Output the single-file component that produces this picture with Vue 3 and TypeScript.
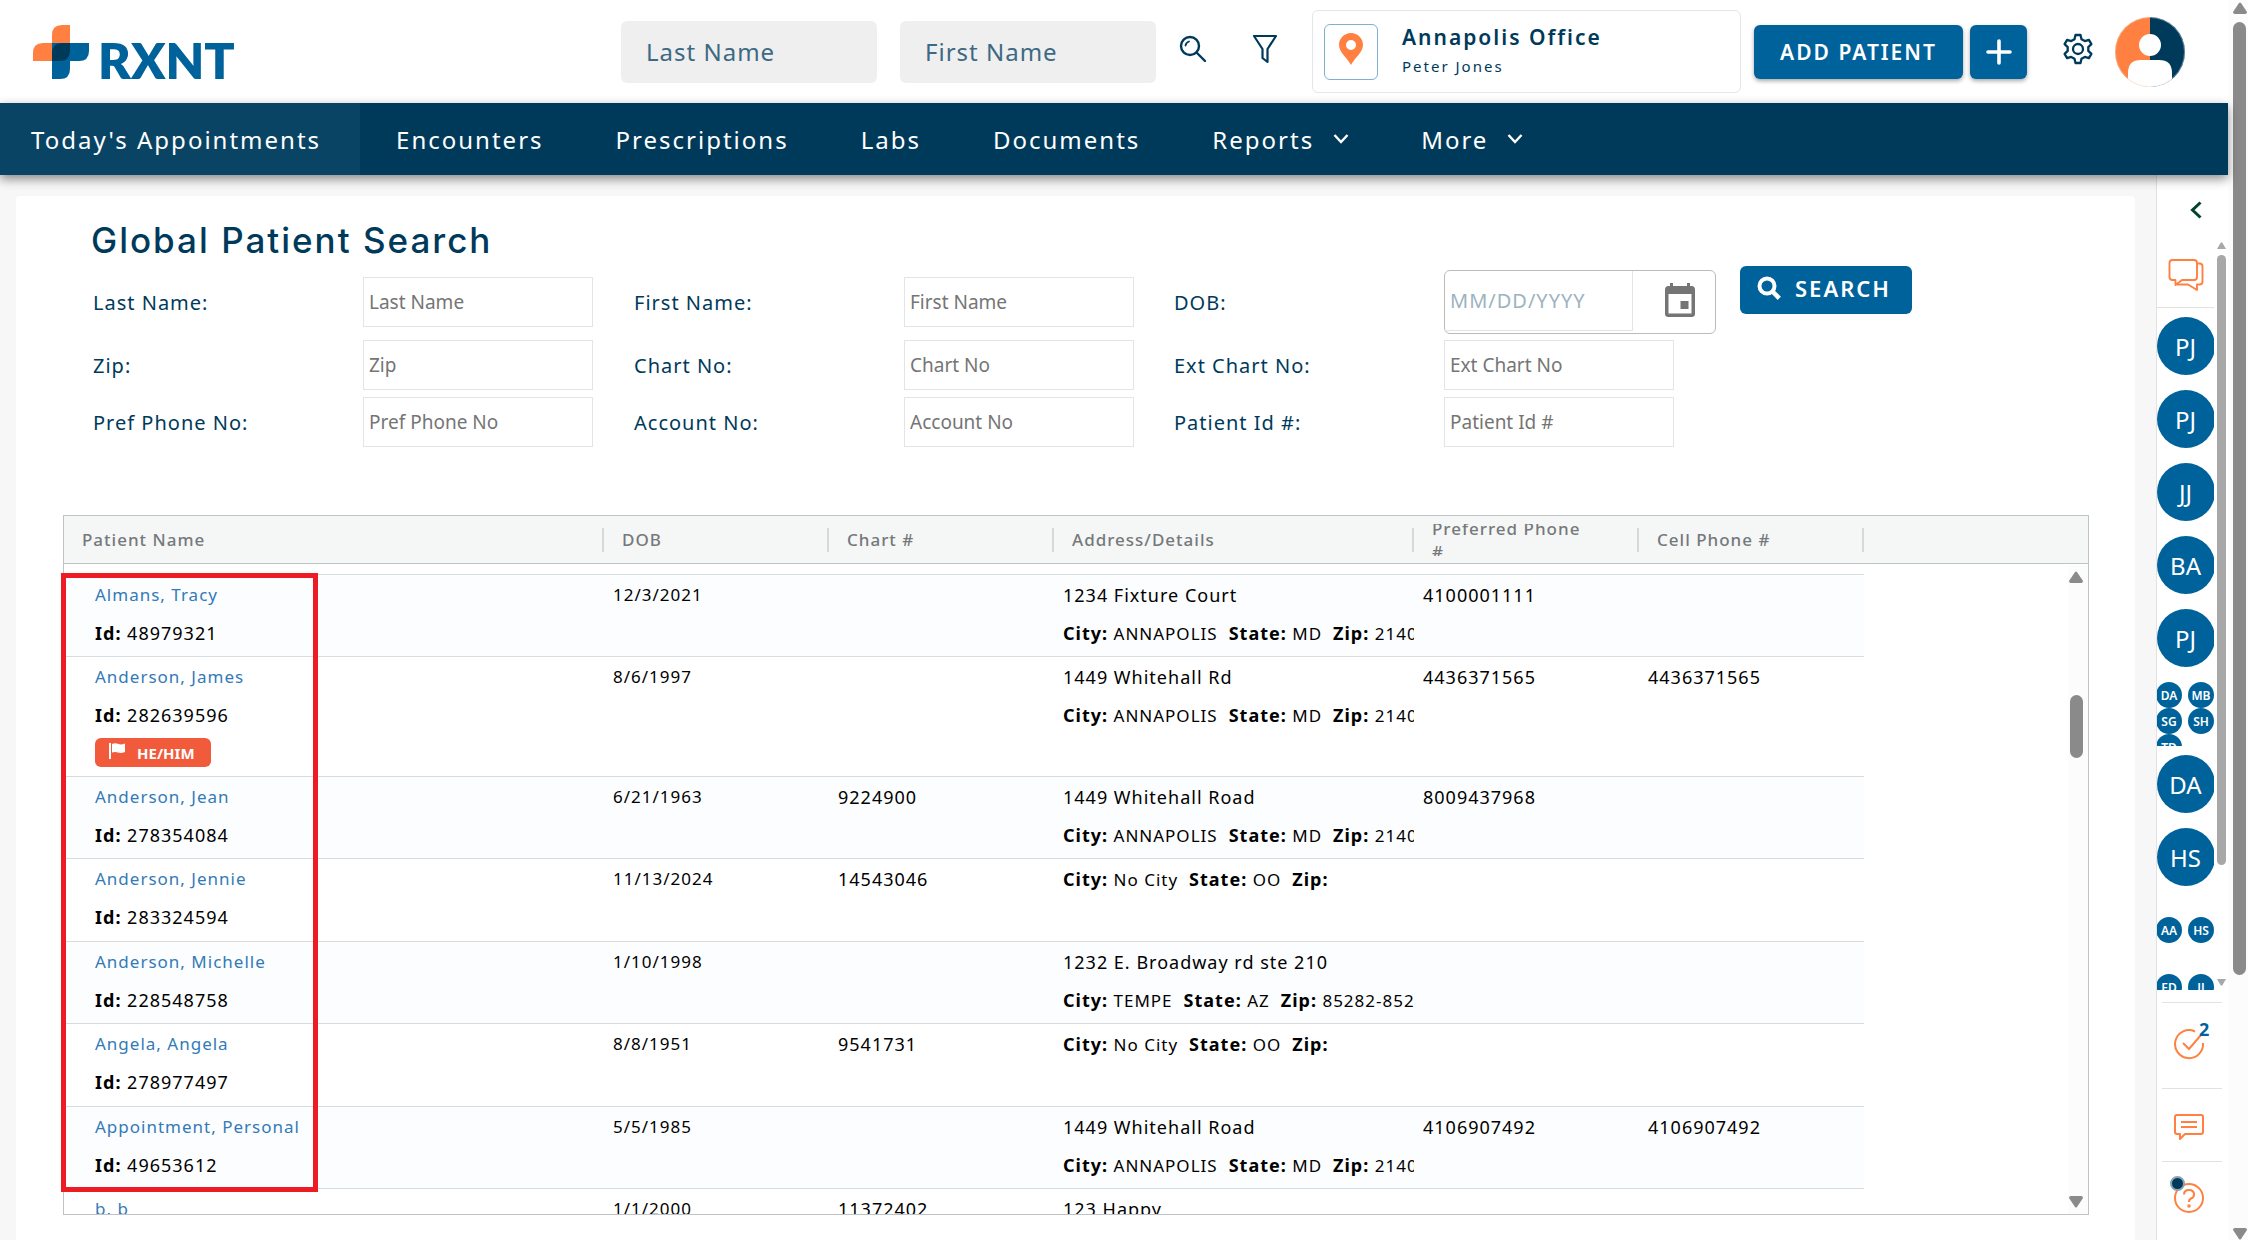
<script setup lang="ts">
import { ref } from 'vue'

interface NavItem { label: string; active?: boolean; menu?: boolean }
interface Field { id: string; label: string; placeholder: string; date?: boolean }
interface Patient {
  name: string
  id?: string
  flag?: string
  dob: string
  chart?: string
  street?: string
  city?: string
  state?: string
  zip?: string
  phone?: string
  cell?: string
}

const navItems: NavItem[] = [
  { label: "Today's Appointments", active: true },
  { label: 'Encounters' },
  { label: 'Prescriptions' },
  { label: 'Labs' },
  { label: 'Documents' },
  { label: 'Reports', menu: true },
  { label: 'More', menu: true },
]

const fields: Field[] = [
  { id: 'last-name', label: 'Last Name:', placeholder: 'Last Name' },
  { id: 'first-name', label: 'First Name:', placeholder: 'First Name' },
  { id: 'dob', label: 'DOB:', placeholder: 'MM/DD/YYYY', date: true },
  { id: 'zip', label: 'Zip:', placeholder: 'Zip' },
  { id: 'chart-no', label: 'Chart No:', placeholder: 'Chart No' },
  { id: 'ext-chart-no', label: 'Ext Chart No:', placeholder: 'Ext Chart No' },
  { id: 'phone-no', label: 'Pref Phone No:', placeholder: 'Pref Phone No' },
  { id: 'account-no', label: 'Account No:', placeholder: 'Account No' },
  { id: 'patient-id', label: 'Patient Id #:', placeholder: 'Patient Id #' },
]

const columns = ['Patient Name', 'DOB', 'Chart #', 'Address/Details', 'Preferred Phone #', 'Cell Phone #']

const patients: Patient[] = [
  { name: 'Almans, Tracy', id: '48979321', dob: '12/3/2021', street: '1234 Fixture Court', city: 'ANNAPOLIS', state: 'MD', zip: '2140', phone: '4100001111' },
  { name: 'Anderson, James', id: '282639596', flag: 'HE/HIM', dob: '8/6/1997', street: '1449 Whitehall Rd', city: 'ANNAPOLIS', state: 'MD', zip: '2140', phone: '4436371565', cell: '4436371565' },
  { name: 'Anderson, Jean', id: '278354084', dob: '6/21/1963', chart: '9224900', street: '1449 Whitehall Road', city: 'ANNAPOLIS', state: 'MD', zip: '2140', phone: '8009437968' },
  { name: 'Anderson, Jennie', id: '283324594', dob: '11/13/2024', chart: '14543046', city: 'No City', state: 'OO', zip: '' },
  { name: 'Anderson, Michelle', id: '228548758', dob: '1/10/1998', street: '1232 E. Broadway rd ste 210', city: 'TEMPE', state: 'AZ', zip: '85282-852' },
  { name: 'Angela, Angela', id: '278977497', dob: '8/8/1951', chart: '9541731', city: 'No City', state: 'OO', zip: '' },
  { name: 'Appointment, Personal', id: '49653612', dob: '5/5/1985', street: '1449 Whitehall Road', city: 'ANNAPOLIS', state: 'MD', zip: '2140', phone: '4106907492', cell: '4106907492' },
  { name: 'b, b', dob: '1/1/2000', chart: '11372402', street: '123 Happy' },
]

const chats: string[][] = [
  ['PJ'], ['PJ'], ['JJ'], ['BA'], ['PJ'],
  ['DA', 'MB', 'SG', 'SH', 'TD'],
  ['DA'], ['HS'],
  ['AA', 'HS'],
  ['ED', 'JJ', 'PJ'],
]

const form = ref<Record<string, string>>({})
</script>

<template>
  <div class="app">
    <div class="page">
      <header class="top">
        <a class="logo" href="#" aria-label="RXNT">
          <svg width="56" height="54" viewBox="0 0 56 54">
            <path d="M19 18V10Q19 0 29 0H37V18Z" fill="#ff8040" />
            <path d="M0 36V28Q0 18 10 18H28V36Z" fill="#ff8040" />
            <path d="M19 18H56V26Q56 36 46 36H37V44Q37 54 27 54H19Z" fill="#00629b" />
            <path d="M19 36V28Q19 18 29 18H37V26Q37 36 27 36Z" fill="#003a5b" />
          </svg>
          <span>RXNT</span>
        </a>
        <input class="quick" type="text" placeholder="Last Name" aria-label="Quick search last name">
        <input class="quick" type="text" placeholder="First Name" aria-label="Quick search first name">
        <button class="icon find" aria-label="Search">
          <svg width="28" height="28" viewBox="0 0 28 28" fill="none" stroke="#003a5b" stroke-width="2.4" stroke-linecap="round">
            <circle cx="11" cy="11" r="9" /><path d="M17.5 17.5 26 26" /><path d="M6.5 10.5A5 5 0 0 1 10 6.5" stroke-width="1.8" />
          </svg>
        </button>
        <button class="icon filter" aria-label="Filter">
          <svg width="26" height="30" viewBox="0 0 26 30" fill="none" stroke="#003a5b" stroke-width="2.2" stroke-linejoin="round">
            <path d="M2 2H24L15.500 15V28L10.500 24V15Z" />
          </svg>
        </button>
        <button class="office">
          <span class="pin">
            <svg width="24" height="32" viewBox="0 0 24 32"><path fill="#ff8040" fill-rule="evenodd" d="M12 0C5.400 0 0 5.200 0 11.700 0 19.500 8.500 25 12 32 15.500 25 24 19.500 24 11.700 24 5.200 18.600 0 12 0ZM12 7a5 5 0 1 1 0 10 5 5 0 0 1 0-10Z" /></svg>
          </span>
          <span class="who"><strong>Annapolis Office</strong><small>Peter Jones</small></span>
        </button>
        <button class="primary add">ADD PATIENT</button>
        <button class="primary plus" aria-label="Add">
          <svg width="26" height="26" viewBox="0 0 26 26" stroke="#fff" stroke-width="3.600" stroke-linecap="round"><path d="M13 2V24M2 13H24" /></svg>
        </button>
        <button class="icon gear" aria-label="Settings">
          <svg width="30" height="32" viewBox="0 0 30 32" fill="none" stroke="#003a5b" stroke-width="2.300" stroke-linejoin="round">
            <path d="M12.500 2h5l1 4.200 3.300 1.900 4.100-1.300 2.500 4.300-3.100 3v3.800l3.100 3-2.500 4.300-4.100-1.300-3.300 1.900-1 4.200h-5l-1-4.200-3.300-1.900-4.100 1.300-2.500-4.300 3.100-3v-3.800l-3.100-3 2.500-4.300 4.100 1.300 3.300-1.900Z" />
            <circle cx="15" cy="16" r="5" />
          </svg>
        </button>
        <button class="icon profile" aria-label="Profile">
          <svg width="70" height="70" viewBox="0 0 70 70">
            <clipPath id="face"><circle cx="35" cy="35" r="35" /></clipPath>
            <g clip-path="url(#face)">
              <rect width="35" height="70" fill="#ff8040" /><rect x="35" width="35" height="70" fill="#003a5b" />
              <circle cx="35" cy="28" r="11" fill="#fff" />
              <path d="M13 70V56Q13 43 26 43H44Q57 43 57 56V70Z" fill="#fff" />
            </g>
            <circle cx="35" cy="35" r="34.500" fill="none" stroke="#e8eaec" stroke-opacity=".4" />
          </svg>
        </button>
      </header>

      <nav class="nav">
        <a v-for="item in navItems" :key="item.label" href="#" :class="{ active: item.active }">
          {{ item.label }}
          <svg v-if="item.menu" width="16" height="12" viewBox="0 0 16 12" fill="none" stroke="#fff" stroke-width="2.400"><path d="M1.500 2 8 9 14.500 2" /></svg>
        </a>
      </nav>

      <div class="body">
        <main class="card">
          <h1>Global Patient Search</h1>
          <form class="search" @submit.prevent>
            <div class="fields">
              <template v-for="f in fields" :key="f.id">
                <label :for="f.id">{{ f.label }}</label>
                <div v-if="f.date" class="date">
                  <input :id="f.id" v-model="form[f.id]" type="text" :placeholder="f.placeholder">
                  <button type="button" aria-label="Open calendar">
                    <svg width="32" height="36" viewBox="0 0 32 36" fill="#757575">
                      <path fill-rule="evenodd" d="M6 1h3v3h14V1h3v3h1.500Q31 4 31 7.500V32q0 3-3.500 3h-23Q1 35 1 32V7.500Q1 4 4.500 4H6ZM4.500 12V31.500h23V12Z" />
                      <rect x="16.500" y="19" width="8" height="8" />
                    </svg>
                  </button>
                </div>
                <input v-else :id="f.id" v-model="form[f.id]" class="box" type="text" :placeholder="f.placeholder">
              </template>
            </div>
            <button class="go" type="submit">
              <svg width="24" height="24" viewBox="0 0 24 24" fill="none" stroke="#fff" stroke-width="4"><circle cx="10" cy="10" r="7.500" /><path d="M15.500 15.500 22.300 22.300" stroke-width="4.500" /></svg>
              SEARCH
            </button>
          </form>

          <div class="grid">
            <div class="viewport">
              <table>
                <colgroup><col class="c-name"><col class="c-s"><col class="c-s"><col class="c-addr"><col class="c-s"><col class="c-s"><col></colgroup>
                <thead>
                  <tr><th v-for="c in columns" :key="c" scope="col"><div><span>{{ c }}</span></div></th><td /></tr>
                </thead>
                <tbody>
                  <tr class="lead" aria-hidden="true"><td colspan="6" /><td /></tr>
                  <tr v-for="p in patients" :key="p.name" class="row" :class="{ tall: p.flag }">
                    <td class="name">
                      <a href="#">{{ p.name }}</a>
                      <p v-if="p.id"><b>Id:</b> {{ p.id }}</p>
                      <span v-if="p.flag" class="flag">
                        <svg width="16" height="16" viewBox="0 0 16 16" fill="#fff"><path d="M0 0H2V16H0ZM3 1Q6-.5 9 .8T16 .5V9Q12 10.500 9 9.500T3 9.500Z" /></svg>
                        {{ p.flag }}
                      </span>
                    </td>
                    <td class="dob">{{ p.dob }}</td>
                    <td>{{ p.chart }}</td>
                    <td>
                      <p v-if="p.street">{{ p.street }}</p>
                      <p v-if="p.city" class="city"><span><b>City:</b> {{ p.city }}</span><span><b>State:</b> {{ p.state }}</span><span><b>Zip:</b> {{ p.zip }}</span></p>
                    </td>
                    <td>{{ p.phone }}</td>
                    <td>{{ p.cell }}</td>
                    <td />
                  </tr>
                </tbody>
              </table>
            </div>
            <div class="bar" aria-hidden="true">
              <svg width="14" height="12" viewBox="0 0 14 12" fill="#8a8a8a"><path d="M6 1Q7 0 8 1L14 10Q14 12 12 12H2Q0 12 0 10Z" /></svg>
              <i class="thumb" />
              <svg width="14" height="12" viewBox="0 0 14 12" fill="#8a8a8a"><path d="M6 11Q7 12 8 11L14 2Q14 0 12 0H2Q0 0 0 2Z" /></svg>
            </div>
            <div class="mark" />
          </div>
        </main>

        <aside class="side">
          <button class="icon collapse" aria-label="Expand panel">
            <svg width="12" height="18" viewBox="0 0 12 18" fill="none" stroke="#00432f" stroke-width="3"><path d="M10.500 1.500 2.500 9 10.500 16.500" /></svg>
          </button>
          <div class="chatwrap">
            <div class="chats">
              <button class="icon talk" aria-label="Conversations">
                <svg width="36" height="34" viewBox="0 0 36 34" fill="none" stroke="#ff8040" stroke-width="1.900" stroke-linejoin="round">
                  <path d="M4.500 2H26Q29 2 29 5V19Q29 22 26 22H14L7.500 27V22H4.500Q1.500 22 1.500 19V5Q1.500 2 4.500 2Z" />
                  <path d="M29 5.500H31.500Q34.500 5.500 34.500 8.500V23.500Q34.500 26.500 31.500 26.500H29V32L20 26.500H9" />
                </svg>
              </button>
              <button v-for="(c, i) in chats" :key="i" class="chat" :class="{ pair: c.length > 1, mid: c.length === 2 }">
                <span v-for="n in c" :key="n">{{ n }}</span>
              </button>
            </div>
            <div class="slim" aria-hidden="true">
              <svg width="9" height="7" viewBox="0 0 9 7" fill="#a8a8a8"><path d="M3.500 1Q4.500-.5 5.500 1L9 7H0Z" /></svg>
              <i class="thumb" />
              <svg width="9" height="7" viewBox="0 0 9 7" fill="#a8a8a8"><path d="M3.500 6Q4.500 7.500 5.500 6L9 0H0Z" /></svg>
            </div>
          </div>
          <button class="tool tasks" aria-label="Tasks">
            <svg width="32" height="32" viewBox="0 0 32 32" fill="none" stroke="#ff8040" stroke-width="2"><path d="M22 3.500A14 14 0 1 0 30 15" /><path d="M10 15 16 21 28 7" /></svg>
            <b>2</b>
          </button>
          <button class="tool" aria-label="Messages">
            <svg width="32" height="28" viewBox="0 0 32 28" fill="none" stroke="#ff8040" stroke-width="2" stroke-linejoin="round"><path d="M4 2H28Q30 2 30 4V19Q30 21 28 21H12L7 26V21H4Q2 21 2 19V4Q2 2 4 2ZM8 9H24M8 14H24" /></svg>
          </button>
          <button class="tool help" aria-label="Help">
            <svg width="32" height="32" viewBox="0 0 32 32" fill="none" stroke="#ff8040" stroke-width="2"><circle cx="16" cy="16" r="14" /><path d="M11 12.500Q11 8 16 8T21 12.500Q21 15.500 18 16.500 16 17.300 16 20" /><circle cx="16" cy="24" r=".8" /></svg>
            <i />
          </button>
        </aside>
      </div>
    </div>

    <div class="scroll" aria-hidden="true">
      <svg width="14" height="12" viewBox="0 0 14 12" fill="#8a8a8a"><path d="M6 1Q7 0 8 1L14 10Q14 12 12 12H2Q0 12 0 10Z" /></svg>
      <i class="thumb" />
      <svg width="14" height="12" viewBox="0 0 14 12" fill="#8a8a8a"><path d="M6 11Q7 12 8 11L14 2Q14 0 12 0H2Q0 0 0 2Z" /></svg>
    </div>
  </div>
</template>

<style>
body { margin: 0; background: #f7f7f7; }
</style>

<style scoped>
* { box-sizing: border-box; }
.app {
  display: flex;
  height: 100vh;
  overflow: hidden;
  font-family: "Noto Sans", "Open Sans", sans-serif;
  color: #003a5b;
}
button { font: inherit; color: inherit; padding: 0; border: 0; background: none; cursor: pointer; }
input { font: inherit; color: inherit; min-width: 0; }
a { text-decoration: none; }
p { margin: 0; }
svg { flex: none; display: block; }
.page { flex: 1; min-width: 0; display: flex; flex-direction: column; }

.top { flex: none; display: flex; align-items: center; height: 103px; padding: 0 43px 0 33px; background: #fff; }
.logo { display: flex; gap: 9px; align-items: flex-end; margin-right: auto; color: #00629b; font: 800 50px/37px Lato, sans-serif; }
.quick { width: 256px; height: 62px; margin-right: 23px; padding: 0 25px; border: 0; border-radius: 6px; background: #efefef; font-size: 24px; letter-spacing: 1px; }
.quick::placeholder { color: #3e6983; opacity: 1; }
.icon { display: flex; align-items: center; justify-content: center; }
.find { width: 28px; margin-right: 45px; padding-bottom: 6px; }
.filter { width: 26px; margin-right: 34px; padding-bottom: 6px; }
.office { display: flex; align-items: center; gap: 24px; width: 429px; height: 83px; padding: 0 11px; margin-right: 13px; border: 1px solid #e6e6e6; border-radius: 6px; text-align: left; }
.pin { display: flex; align-items: center; justify-content: center; width: 54px; height: 56px; padding-bottom: 6px; border: 1px solid #80b0cd; border-radius: 6px; }
.who { display: flex; flex-direction: column; gap: 3px; padding-bottom: 2px; }
.who strong { font-size: 21px; font-weight: 600; line-height: 28px; letter-spacing: 2px; }
.who small { font-size: 15px; line-height: 24px; letter-spacing: 2px; }
.primary { display: flex; align-items: center; justify-content: center; height: 54px; border-radius: 6px; background: #00629b; color: #fff; box-shadow: 0 2px 4px rgba(0, 0, 0, .35); }
.add { width: 209px; margin-right: 7px; font-size: 21px; font-weight: 600; letter-spacing: 2px; }
.plus { width: 57px; margin-right: 36px; }
.gear { width: 30px; margin-right: 22px; padding-bottom: 6px; }

.nav { flex: none; position: relative; z-index: 2; display: flex; height: 72px; background: #003a5b; box-shadow: 0 4px 10px rgba(0, 0, 0, .45); }
.nav a { display: flex; align-items: center; gap: 19px; padding: 0 36px; color: #fff; font-size: 24px; letter-spacing: 2px; white-space: nowrap; }
.nav a.active { padding: 0 39px 0 31px; background: #0a4464; }

.body { flex: 1; min-height: 0; display: flex; background: #f7f7f7; }
.card { flex: 1; min-width: 0; display: flex; flex-direction: column; margin: 21px 21px 0 16px; padding: 20px 46px 25px 47px; border-radius: 4px 4px 0 0; background: #fff; }
h1 { margin: 0 0 6px 28px; font: 500 35px/48px Inter, sans-serif; letter-spacing: 2px; }
.search { display: flex; align-items: flex-start; padding-left: 30px; margin-bottom: 67px; }
.fields { display: grid; grid-template-columns: 270px 271px 270px 270px 270px 296px; grid-template-rows: 64px 50px 52px; row-gap: 6px; align-items: center; }
.fields label { font-size: 20px; letter-spacing: 1px; }
.box { width: 230px; height: 50px; padding: 0 5px; border: 1px solid #e4e4e4; background: #fff; font-size: 19px; }
.box::placeholder { color: #757575; opacity: 1; }
.date { display: flex; width: 272px; height: 64px; border: 1px solid #bbb; border-radius: 6px; }
.date input { width: 188px; height: 60px; padding: 0 5px; border: 0 solid #e4e4e4; border-width: 0 1px 1px 0; background: none; font-size: 20px; letter-spacing: 1px; }
.date input::placeholder { color: #9cb3c0; opacity: 1; }
.date button { flex: 1; display: flex; align-items: center; justify-content: center; padding: 0 0 4px 12px; }
.go { display: flex; align-items: center; justify-content: center; gap: 14px; width: 172px; height: 48px; padding: 0 4px 4px 0; margin-top: -4px; border-radius: 6px; background: #00629b; color: #fff; font-size: 22px; font-weight: 600; letter-spacing: 2px; }

.grid { position: relative; flex: 1; min-height: 0; display: flex; border: 1px solid #bdc3c7; }
.viewport { flex: 1; min-width: 0; overflow: hidden; }
table { width: 100%; table-layout: fixed; border-collapse: separate; border-spacing: 0; font-size: 18px; letter-spacing: 1px; }
.c-name { width: 540px; }
.c-s { width: 225px; }
.c-addr { width: 360px; }
th, thead td { height: 48px; padding: 0; background: #f5f7f7; border-bottom: 1px solid #bdc3c7; }
th div { display: flex; align-items: center; height: 32px; padding: 0 50px 0 18px; overflow: hidden; color: #75797b; font-size: 17px; font-weight: 500; line-height: 23px; text-align: left; background: linear-gradient(#d5d9dc, #d5d9dc) right / 2px 24px no-repeat; }
td { padding: 0; }
.lead td { height: 11px; }
.lead td:first-child { border-bottom: 1px solid #d9dcde; }
.row td { height: 82px; padding: 1px 0 0 9px; color: #000; line-height: 38px; vertical-align: top; white-space: nowrap; overflow: hidden; }
.row td:not(:last-child) { border-bottom: 1px solid #d9dcde; }
.row:nth-child(odd) td { height: 83px; }
.row:nth-child(even) td:not(:last-child) { background: #fcfdfe; }
.row.tall td { height: 120px; }
.row .name { padding-left: 31px; }
.row .dob, .name a, .city { font-size: 17px; }
.name a { display: block; color: #337ab7; }
.city { display: flex; gap: 11px; }
.city b { font-size: 18px; }
.flag { display: flex; align-items: center; gap: 12px; width: 116px; height: 29px; margin-top: 4px; padding-left: 14px; border-radius: 6px; background: #f15a3b; color: #fff; font-size: 15px; font-weight: 700; letter-spacing: 0; }
.flag svg { margin-bottom: 4px; }
.bar { position: absolute; top: 49px; right: 0; bottom: 0; display: flex; flex-direction: column; align-items: center; width: 20px; padding: 6px 4px 6px 0; background: #fcfcfc; }
.bar .thumb { width: 13px; height: 63px; margin: 112px 0 auto; border-radius: 7px; background: #8a8a8a; }
.mark { position: absolute; top: 57px; left: -3px; width: 257px; height: 619px; border: 5px solid #ed1c24; pointer-events: none; }

.side { flex: none; display: flex; flex-direction: column; width: 72px; border-left: 1px solid #e2e2e2; background: #fff; }
.collapse { height: 18px; margin: 26px 0 23px 6px; }
.chatwrap { flex: 1; min-height: 0; display: flex; }
.chats { flex: 1; overflow: hidden; display: flex; flex-direction: column; gap: 9px; }
.talk { flex: none; height: 66px; margin: 0; border-bottom: 1px solid #e2e2e2; }
.chat { flex: none; display: flex; flex-wrap: wrap; justify-content: center; align-content: flex-start; height: 64px; width: 57px; overflow: hidden; }
.chat span { flex: none; display: flex; align-items: center; justify-content: center; width: 58px; height: 58px; border-radius: 50%; background: #00629b; color: #fff; font: 24px "Noto Sans", sans-serif; }
.chat.pair { justify-content: space-between; width: 58px; margin-left: -1px; }
.chat.pair span { width: 26px; height: 26px; font-size: 12px; font-weight: 600; }
.chat.mid { padding-top: 16px; }
.slim { display: flex; flex-direction: column; align-items: center; width: 14px; padding-bottom: 4px; }
.slim .thumb { width: 9px; height: 610px; margin: 6px 0 auto; border-radius: 5px; background: #a8a8a8; }
.tool { flex: none; position: relative; display: flex; align-items: center; justify-content: center; height: 73px; padding: 4px 7px 0 0; margin: 0 6px 0 5px; border-top: 1px solid #e2e2e2; }
.tool.tasks { height: 86px; margin-top: 12px; padding: 0 7px 4px 0; }
.tasks b { position: absolute; top: 14px; left: 37px; color: #00629b; font-size: 18px; line-height: 24px; }
.tool.help { height: 79px; padding: 0 7px 6px 0; }
.help i { position: absolute; top: 14px; left: 8px; width: 15px; height: 15px; border: 2px solid #8aa3b3; border-radius: 50%; background: #003a5b; }

.scroll { flex: none; display: flex; flex-direction: column; align-items: center; width: 20px; padding: 2px 0 0 3px; background: #fcfcfc; }
.scroll .thumb { width: 13px; flex: 0 0 77%; margin: 8px 0 auto; border-radius: 7px; background: #8a8a8a; }
</style>
